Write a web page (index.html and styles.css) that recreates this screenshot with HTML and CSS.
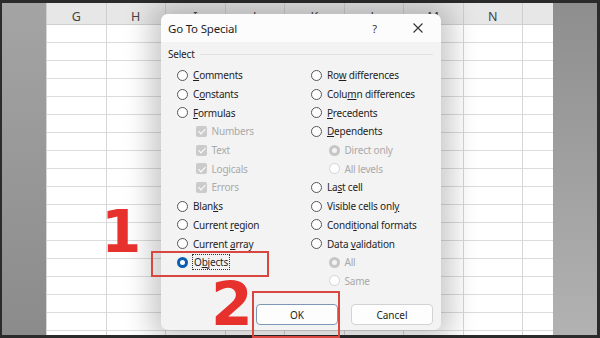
FILE: index.html
```html
<!DOCTYPE html>
<html lang="en">
<head>
    <meta charset="UTF-8">
    <meta name="viewport" content="width=device-width, initial-scale=1.0">
    <title>Go To Special</title>
    <link rel="stylesheet" href="styles.css">
</head>
<body>
    <div class="frame">
        <div class="side side-left"></div>

        <div class="sheet">
            <div class="header-row">
                <div class="corner"></div>
                <div class="col-head">G</div>
                <div class="col-head">H</div>
                <div class="col-head">I</div>
                <div class="col-head">J</div>
                <div class="col-head">K</div>
                <div class="col-head">L</div>
                <div class="col-head">M</div>
                <div class="col-head">N</div>
                <div class="col-head last"></div>
            </div>
            <div class="grid-body">
                <div class="row-strip"></div>
                <div class="col"></div>
                <div class="col"></div>
                <div class="col"></div>
                <div class="col"></div>
                <div class="col"></div>
                <div class="col"></div>
                <div class="col"></div>
                <div class="col"></div>
                <div class="col last"></div>
            </div>
        </div>

        <div class="side side-right"></div>
    </div>

    <!-- dialog sits over the sheet -->
    <div class="dialog">
        <div class="title-bar">
            <span class="title">Go To Special</span>
            <span class="help">?</span>
            <svg class="close" width="12" height="12" viewBox="0 0 12 12">
                <path d="M1.5 1.5 L10.5 10.5 M10.5 1.5 L1.5 10.5" stroke="#333" stroke-width="1.1" fill="none"/>
            </svg>
        </div>

        <div class="dialog-body">
            <div class="group-label"><span>Select</span></div>

            <div class="options">
                <div class="column">
                    <div class="opt"><span class="radio"></span><span><u>C</u>omments</span></div>
                    <div class="opt"><span class="radio"></span><span>C<u>o</u>nstants</span></div>
                    <div class="opt"><span class="radio"></span><span><u>F</u>ormulas</span></div>
                    <div class="opt sub-check disabled"><span class="check"></span><span>Numbers</span></div>
                    <div class="opt sub-check disabled"><span class="check"></span><span>Text</span></div>
                    <div class="opt sub-check disabled"><span class="check"></span><span>Logicals</span></div>
                    <div class="opt sub-check disabled"><span class="check"></span><span>Errors</span></div>
                    <div class="opt"><span class="radio"></span><span>Blan<u>k</u>s</span></div>
                    <div class="opt"><span class="radio"></span><span>Current <u>r</u>egion</span></div>
                    <div class="opt"><span class="radio"></span><span>Current <u>a</u>rray</span></div>
                    <div class="opt"><span class="radio selected"></span><span class="focus">O<u>b</u>jects</span></div>
                </div>
                <div class="column">
                    <div class="opt"><span class="radio"></span><span>Ro<u>w</u> differences</span></div>
                    <div class="opt"><span class="radio"></span><span>Colu<u>m</u>n differences</span></div>
                    <div class="opt"><span class="radio"></span><span><u>P</u>recedents</span></div>
                    <div class="opt"><span class="radio"></span><span><u>D</u>ependents</span></div>
                    <div class="opt sub-radio disabled"><span class="radio dim-on"></span><span>Direct only</span></div>
                    <div class="opt sub-radio disabled"><span class="radio"></span><span>All levels</span></div>
                    <div class="opt"><span class="radio"></span><span>La<u>s</u>t cell</span></div>
                    <div class="opt"><span class="radio"></span><span>Visible cells onl<u>y</u></span></div>
                    <div class="opt"><span class="radio"></span><span>Condi<u>t</u>ional formats</span></div>
                    <div class="opt"><span class="radio"></span><span>Data <u>v</u>alidation</span></div>
                    <div class="opt sub-radio disabled"><span class="radio dim-on"></span><span>All</span></div>
                    <div class="opt sub-radio disabled"><span class="radio"></span><span>Same</span></div>
                </div>
            </div>

            <div class="buttons">
                <button class="btn btn-default">OK</button>
                <button class="btn">Cancel</button>
            </div>
        </div>
    </div>

    <!-- tutorial markers -->
    <div class="step-num step-one">1</div>
    <div class="step-num step-two">2</div>
    <div class="mark mark-objects"></div>
    <div class="mark mark-ok"></div>
</body>
</html>
```

FILE: styles.css
```css
* {
    box-sizing: border-box;
}

body {
    margin: 0;
    width: 600px;
    height: 338px;
    overflow: hidden;
    background: #2b2b2b;
    font-family: "Noto Sans", "Open Sans", sans-serif;
    position: relative;
}

.frame {
    display: flex;
    height: 332px;
    margin: 3px 3px 0 2px;
}

.side {
    width: 44px;
}

.side-left {
    background: linear-gradient(to bottom, #a4a4a4, #8b8b8b);
}

.side-right {
    width: 44px;
    background: linear-gradient(to bottom, #8e8e8e, #b2b2b2);
}

.sheet {
    flex: 1;
    background: #fff;
    display: flex;
    flex-direction: column;
    overflow: hidden;
}

.header-row {
    display: flex;
    height: 22px;
    background: #e7e7e7;
    border-bottom: 1px solid #cfcfcf;
}

.corner {
    width: 7px;
    border-right: 1px solid #cfcfcf;
}

.col-head {
    width: 59.5px;
    flex-shrink: 0;
    border-right: 1px solid #cfcfcf;
    color: #444;
    font-size: 12.5px;
    text-align: center;
    padding-top: 5px;
    line-height: 17px;
}

.col-head.last {
    border-right: none;
}

.grid-body {
    flex: 1;
    display: flex;
}

.row-strip,
.col {
    border-right: 1px solid #d6d6d6;
    background: repeating-linear-gradient(to bottom, transparent 0 17px, #dcdcdc 17px 18px);
}

.row-strip {
    width: 7px;
}

.col {
    width: 59.5px;
    flex-shrink: 0;
}

.col.last {
    border-right: none;
}

/* dialog */
.dialog {
    position: absolute;
    left: 161px;
    top: 14px;
    width: 280px;
    height: 316px;
    background: #f3f3f3;
    border-radius: 7px;
    box-shadow: 0 0 28px 10px rgba(0, 0, 0, 0.22);
    overflow: hidden;
    display: flex;
    flex-direction: column;
    color: #1f1f1f;
}

.title-bar {
    height: 28px;
    background: #fcfcfc;
    display: flex;
    align-items: center;
    padding-left: 7px;
}

.title {
    flex: 1;
    font-size: 11.5px;
    letter-spacing: -0.2px;
}

.help {
    font-size: 11px;
    margin-right: 35px;
    color: #333;
}

.close {
    margin-right: 17px;
}

.dialog-body {
    flex: 1;
    display: flex;
    flex-direction: column;
    padding: 5px 8px 5px 7px;
}

.group-label {
    display: flex;
    align-items: center;
    height: 14px;
    font-size: 10px;
    letter-spacing: -0.2px;
}

.group-label::after {
    content: "";
    flex: 1;
    height: 1px;
    background: #e0e0e0;
    margin-left: 5px;
}

.options {
    display: grid;
    grid-template-columns: 134px 1fr;
    padding-left: 9px;
    margin-top: 5px;
}

.opt {
    display: flex;
    align-items: center;
    height: 18.7px;
    font-size: 10px;
    letter-spacing: -0.2px;
    white-space: nowrap;
}

.opt u {
    text-underline-offset: 1px;
}

.radio {
    width: 11px;
    height: 11px;
    border: 1px solid #555;
    border-radius: 50%;
    background: #fff;
    margin-right: 5px;
    flex-shrink: 0;
}

.radio.selected {
    border: 3.5px solid #0a5fae;
    background: #fff;
}

.sub-check {
    padding-left: 19px;
}

.sub-radio {
    padding-left: 18px;
}

.disabled {
    color: #a9a9a9;
}

.disabled .radio {
    border-color: #d4d4d4;
    margin-right: 4.5px;
}

.disabled .radio.dim-on {
    border: 3px solid #c6c6c6;
    background: #f4f4f4;
}

.check {
    width: 11px;
    height: 11px;
    border-radius: 2px;
    background: #cbcbcb;
    margin-right: 4.5px;
    position: relative;
}

.check::after {
    content: "";
    position: absolute;
    left: 3.5px;
    top: 1.5px;
    width: 3px;
    height: 6px;
    border: solid #fff;
    border-width: 0 1.3px 1.3px 0;
    transform: rotate(45deg);
}

.focus {
    outline: 1px dotted #333;
    outline-offset: 0;
    padding: 0 1px;
}

.buttons {
    margin-top: auto;
    display: flex;
    justify-content: flex-end;
    gap: 13px;
}

.btn {
    width: 82px;
    height: 21px;
    background: #fdfdfd;
    border: 1px solid #d2d2d2;
    border-radius: 4px;
    font-family: inherit;
    font-size: 10px;
    color: #1f1f1f;
    padding: 0;
}

.btn-default {
    border-color: #7d97b4;
}

/* red annotations */
.step-num {
    position: absolute;
    color: #e6312d;
    font-family: "DejaVu Sans", sans-serif;
    font-weight: 900;
    line-height: 0.75;
}

.step-one {
    left: 101px;
    top: 211px;
    font-size: 58px;
}

.step-two {
    left: 211px;
    top: 282px;
    font-size: 60px;
}

.mark {
    position: absolute;
    border: 2px solid #d8463f;
}

.mark-objects {
    left: 151px;
    top: 251px;
    width: 118px;
    height: 26px;
}

.mark-ok {
    left: 252px;
    top: 291px;
    width: 88px;
    height: 47px;
}
```
